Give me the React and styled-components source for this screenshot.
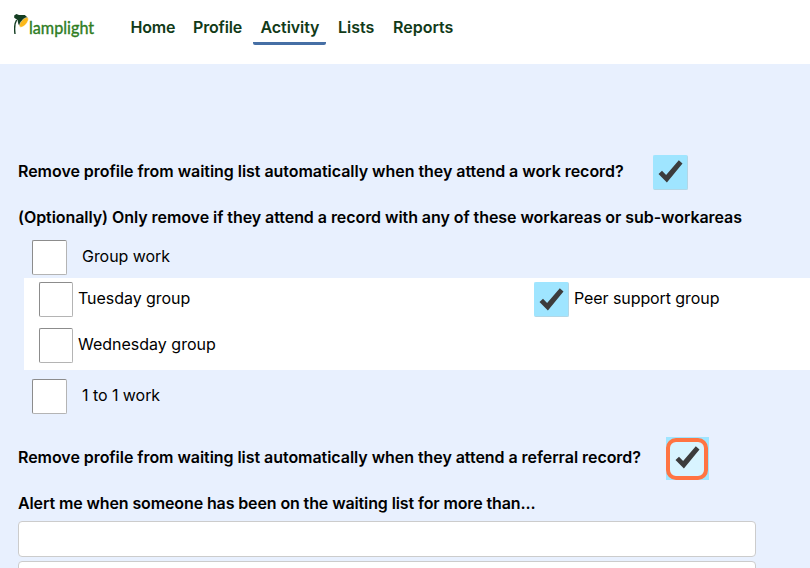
import React from 'react';
import styled, { createGlobalStyle } from 'styled-components';

const GlobalStyle = createGlobalStyle`
  *, *::before, *::after { box-sizing: border-box; }
  html, body { margin: 0; height: 100%; overflow: hidden; }
  body {
    background: #e8f0fe;
    color: #000;
    font: 400 16px/24px Inter, sans-serif;
  }
`;

const Header = styled.header`
  display: flex;
  height: 64px;
  padding: 0 14px;
  background: #fff;
`;

const Logo = styled.a`
  display: flex;
  flex: none;
  width: 109px;
  padding-top: 14px;
  color: #2f7d1f;

  svg { flex: none; }
`;

const LogoText = styled.span`
  height: 24px;
  margin-top: 1px;
  font: 400 18px/24px Lato, sans-serif;
  transform: scaleX(0.9);
  transform-origin: left center;
  -webkit-text-stroke: 0.4px #2f7d1f;
`;

const Nav = styled.nav`
  display: flex;
  align-items: flex-start;
  padding-top: 12px;
`;

const NavItem = styled.a`
  width: ${(p) => p.$width}px;
  height: 33px;
  margin-right: ${(p) => p.$after || 0}px;
  padding: 3px 0 0 7.5px;
  border-bottom: 3px solid ${(p) => (p.$active ? '#466fa5' : 'transparent')};
  border-radius: 0 0 2px 2px;
  color: #113a18;
  font-weight: 600;
  letter-spacing: ${(p) => p.$tracking || 0}px;
  white-space: nowrap;
`;

const Form = styled.main`
  display: flex;
  flex-direction: column;
  height: 504px;
  padding: 85px 0 0 18px;
  overflow: hidden;
`;

const Question = styled.div`
  display: flex;
  flex: none;
  align-items: center;
  height: 46px;
`;

const FieldQuestion = styled(Question)`
  align-items: flex-start;
  height: 40px;
  padding-top: 10px;
`;

const QuestionText = styled.label`
  flex: none;
  width: ${(p) => p.$width}px;
  padding-bottom: 2px;
  font-weight: 600;
  letter-spacing: ${(p) => p.$tracking || 0}px;
  white-space: nowrap;
`;

const Workarea = styled.div`
  display: flex;
  flex: none;
  height: 35px;
  margin: ${(p) => p.$margin};
  padding-left: 14px;
`;

const WorkareaText = styled.label`
  padding: 4px 0 0 15px;
  letter-spacing: -0.05px;
  white-space: nowrap;
`;

const SubWorkareas = styled.div`
  display: grid;
  flex: none;
  grid-template-columns: 495px 1fr;
  grid-auto-rows: 46px;
  margin-left: 6px;
  padding-left: 15px;
  background: #fff;
`;

const SubWorkarea = styled.div`
  display: flex;
  gap: 5px;
  padding-top: 4px;
`;

const SubText = styled.label`
  padding-top: 4px;
  letter-spacing: ${(p) => p.$tracking || 0}px;
  white-space: nowrap;
`;

const Box = styled.span`
  display: flex;
  flex: none;
  align-items: center;
  justify-content: center;
  width: ${(p) => p.$width || 35}px;
  height: 35px;
  border: 1px solid #8c8c8c;
  border-right-color: #b4b4b4;
  border-bottom-color: #b4b4b4;
  border-radius: 2px;
  background: #fff;
`;

const CheckedBox = styled(Box)`
  border-color: #9fe5ff #b3d7e6 #b3d7e6 #9fe5ff;
  background: #9fe5ff;
`;

const HighlightFrame = styled.span`
  display: flex;
  flex: none;
  width: 43px;
  height: 43px;
  padding: 1px 1px 0 0;
  background: #9fe5ff;
`;

const Highlight = styled.span`
  display: flex;
  align-items: center;
  justify-content: center;
  width: 42px;
  height: 42px;
  padding-bottom: 2px;
  border: 4px solid #ff7442;
  border-radius: 10px;
  background: #d8f4ff;
`;

const Field = styled.input`
  flex: none;
  width: 738px;
  height: 36px;
  margin: 0 0 4px;
  border: 1px solid #ccc;
  border-radius: 4px;
  background: #fff;
`;

const CheckMark = () => (
  <svg width="25" height="24" viewBox="0 0 25 24">
    <path d="M0.5 14L4 10.7L8.1 15L20.8 0.2L24.5 3.6L8.9 22.4Z" fill="#3c3c3c" />
  </svg>
);

const LampIcon = () => (
  <svg width="15" height="21" viewBox="0 0 15 21">
    <path d="M2.6 6C0.4 9.5 0.2 14 1 20" fill="none" stroke="#143d22" strokeWidth="1.4" />
    <path d="M0.2 1.5L2.4 0L5 0.9L10.8 1L13.6 3.6L6.4 12.5L4.4 10.3L3.5 6L0.2 3.7Z" fill="#143d22" />
    <ellipse cx="9.9" cy="8.4" rx="2.7" ry="6" transform="rotate(41 9.9 8.4)" fill="#fbb81b" stroke="#fff" strokeWidth="0.4" />
  </svg>
);

const NAV = [
  { label: 'Home', width: 62.5, tracking: -0.2 },
  { label: 'Profile', width: 67.5, tracking: -0.15 },
  { label: 'Activity', width: 73, tracking: -0.08, after: 4.5, active: true },
  { label: 'Lists', width: 55 },
  { label: 'Reports', width: 76 },
];

export default function App() {
  return (
    <>
      <GlobalStyle />
      <Header>
        <Logo>
          <LampIcon />
          <LogoText>lamplight</LogoText>
        </Logo>
        <Nav>
          {NAV.map((n) => (
            <NavItem key={n.label} $width={n.width} $tracking={n.tracking} $after={n.after} $active={n.active}>
              {n.label}
            </NavItem>
          ))}
        </Nav>
      </Header>
      <Form>
        <Question>
          <QuestionText $width={635} $tracking={-0.04}>
            Remove profile from waiting list automatically when they attend a work record?
          </QuestionText>
          <CheckedBox><CheckMark /></CheckedBox>
        </Question>
        <Question>
          <QuestionText $width={740} $tracking={-0.058}>
            (Optionally) Only remove if they attend a record with any of these workareas or sub-workareas
          </QuestionText>
        </Question>
        <Workarea $margin="-1px 0 3px">
          <Box />
          <WorkareaText>Group work</WorkareaText>
        </Workarea>
        <SubWorkareas>
          <SubWorkarea>
            <Box $width={34} />
            <SubText $tracking={-0.05}>Tuesday group</SubText>
          </SubWorkarea>
          <SubWorkarea>
            <CheckedBox><CheckMark /></CheckedBox>
            <SubText $tracking={-0.08}>Peer support group</SubText>
          </SubWorkarea>
          <SubWorkarea>
            <Box $width={34} />
            <SubText>Wednesday group</SubText>
          </SubWorkarea>
        </SubWorkareas>
        <Workarea $margin="9px 0 21px">
          <Box />
          <WorkareaText>1 to 1 work</WorkareaText>
        </Workarea>
        <Question>
          <QuestionText $width={648} $tracking={-0.05}>
            Remove profile from waiting list automatically when they attend a referral record?
          </QuestionText>
          <HighlightFrame>
            <Highlight><CheckMark /></Highlight>
          </HighlightFrame>
        </Question>
        <FieldQuestion>
          <QuestionText $width={600} $tracking={-0.115}>
            Alert me when someone has been on the waiting list for more than...
          </QuestionText>
        </FieldQuestion>
        <Field />
        <Field />
      </Form>
    </>
  );
}
